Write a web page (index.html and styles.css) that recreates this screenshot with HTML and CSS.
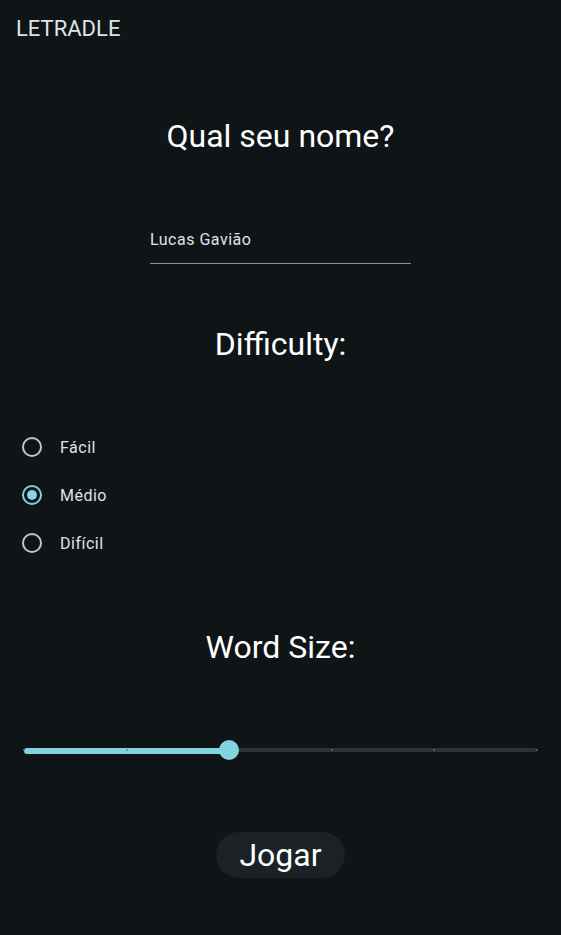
FILE: index.html
```html
<!DOCTYPE html>
<html lang="pt">
<head>
<meta charset="utf-8">
<title>LETRADLE</title>
<link rel="stylesheet" href="styles.css">
</head>
<body>
<header class="appbar">LETRADLE</header>
<main class="content">
  <h2 class="heading heading-name">Qual seu nome?</h2>
  <div class="field">
    <div class="field-text">Lucas Gavião</div>
  </div>
  <h2 class="heading heading-diff">Difficulty:</h2>
  <div class="radios">
    <div class="radio-row"><span class="radio"></span><span class="radio-label">Fácil</span></div>
    <div class="radio-row"><span class="radio radio-on"></span><span class="radio-label">Médio</span></div>
    <div class="radio-row"><span class="radio"></span><span class="radio-label">Difícil</span></div>
  </div>
  <h2 class="heading heading-size">Word Size:</h2>
  <div class="slider">
    <div class="track">
      <div class="track-active" style="width:40%"></div>
      <span class="tick tick-on" style="left:0%"></span>
      <span class="tick tick-on" style="left:20%"></span>
      <span class="tick" style="left:60%"></span>
      <span class="tick" style="left:80%"></span>
      <span class="tick" style="left:100%"></span>
      <span class="thumb" style="left:40%"></span>
    </div>
  </div>
  <div class="actions">
    <button class="play">Jogar</button>
  </div>
</main>
</body>
</html>
```
FILE: styles.css
```css
* { box-sizing: border-box; }
html, body {
  margin: 0;
  padding: 0;
  background: #0f1417;
  color: #dfe3e7;
  font-family: Roboto, "Noto Sans", sans-serif;
}
body { width: 561px; height: 935px; overflow: hidden; }
.appbar {
  height: 56px;
  display: flex;
  align-items: center;
  padding-left: 16px;
  font-size: 22px;
  font-family: Roboto, sans-serif;
  color: #dfe3e7;
}
.content {
  display: flex;
  flex-direction: column;
  align-items: center;
}
.heading {
  margin: 0;
  font-weight: 400;
  font-size: 32px;
  line-height: 36px;
  color: #ffffff;
  text-align: center;
}
.heading-name { margin-top: 62px; }
.field {
  margin-top: 76px;
  width: 261px;
  border-bottom: 1px solid #8b9296;
  padding-bottom: 13px;
}
.field-text {
  font-size: 16px;
  line-height: 20px;
  letter-spacing: 0.5px;
  color: #dfe3e7;
}
.heading-diff { margin-top: 62px; }
.radios {
  align-self: stretch;
  margin-top: 61px;
  display: flex;
  flex-direction: column;
}
.radio-row {
  height: 48px;
  display: flex;
  align-items: center;
  padding-left: 22px;
}
.radio {
  width: 20px;
  height: 20px;
  border: 2px solid #bfc8cc;
  border-radius: 50%;
  display: flex;
  align-items: center;
  justify-content: center;
}
.radio-on { border-color: #83d3e1; }
.radio-on::after {
  content: "";
  width: 10px;
  height: 10px;
  border-radius: 50%;
  background: #83d3e1;
}
.radio-label {
  margin-left: 18px;
  font-size: 16px;
  font-weight: 400;
  letter-spacing: 0.5px;
  color: #dfe3e7;
}
.heading-size { margin-top: 62px; }
.slider {
  align-self: stretch;
  margin-top: 84px;
  padding: 0 24px;
}
.track {
  position: relative;
  height: 4px;
  border-radius: 2px;
  background: #2d3336;
}
.track-active {
  height: 6px;
  margin-top: -1px;
  border-radius: 3px;
  background: #83d3e1;
}
.tick {
  position: absolute;
  top: 1px;
  width: 2px;
  height: 2px;
  margin-left: -1px;
  border-radius: 1px;
  background: #5d6669;
}
.tick-on { background: #3f8a97; }
.thumb {
  position: absolute;
  top: 50%;
  width: 20px;
  height: 20px;
  margin: -10px 0 0 -10px;
  border-radius: 50%;
  background: #83d3e1;
}
.actions {
  margin-top: 80px;
}
.play {
  border: 0;
  background: #1b2124;
  color: #ffffff;
  font-family: Roboto, sans-serif;
  font-size: 32px;
  height: 46px;
  padding: 0 23px;
  border-radius: 23px;
}
```
